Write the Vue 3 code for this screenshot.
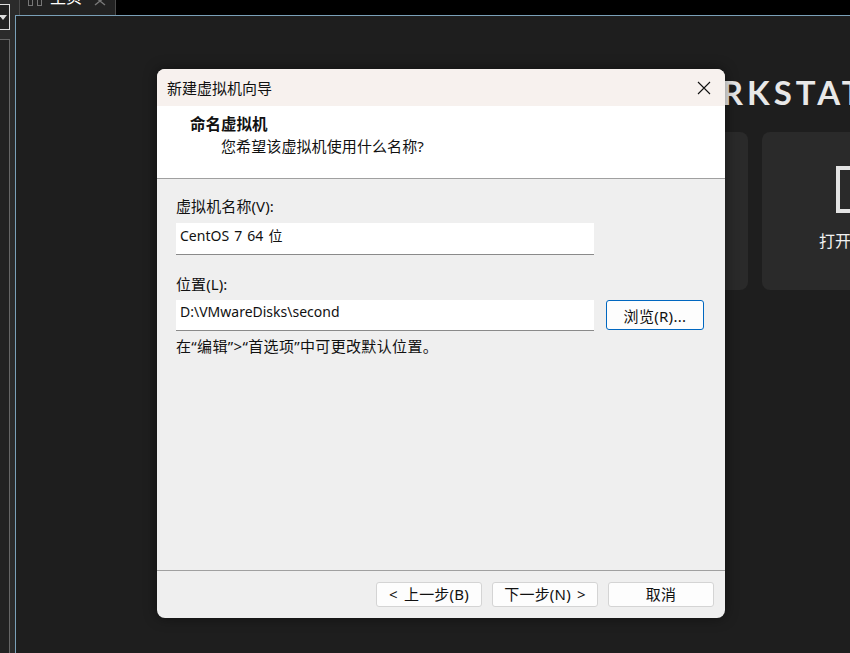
<script setup>
const footerButtons = ['< 上一步(B)', '下一步(N) >', '取消']
</script>

<template>
  <div class="app">
    <div class="topbar">
      <div class="top-left"></div>
      <div class="tab">
        <span class="tab-icon"><i></i><i></i></span>
        <span class="tab-title">主页</span>
        <svg class="tab-close" width="12" height="12" viewBox="0 0 12 12">
          <path d="M1 -3 L11 5 M11 -3 L1 5" stroke="#777" stroke-width="1.4" fill="none" />
        </svg>
      </div>
    </div>
    <div class="workspace">
      <aside class="side">
        <div class="side-drop"><span class="caret"></span></div>
        <div class="side-tree"></div>
      </aside>
      <main class="home">
        <div class="brand">WORKSTATION PRO</div>
        <div class="cards">
          <div class="card"></div>
          <div class="card">
            <div class="card-icon"></div>
            <div class="card-label">打开虚拟机</div>
          </div>
        </div>
      </main>
    </div>

    <section class="dialog">
      <header class="dlg-title">
        <span>新建虚拟机向导</span>
        <svg class="close" width="14" height="14" viewBox="0 0 14 14">
          <path d="M1 1 L13 13 M13 1 L1 13" stroke="#111" stroke-width="1.1" fill="none" />
        </svg>
      </header>
      <div class="dlg-head">
        <div class="head-title">命名虚拟机</div>
        <div class="head-sub">您希望该虚拟机使用什么名称?</div>
      </div>
      <div class="dlg-body">
        <label class="lbl">虚拟机名称(V):</label>
        <div class="row">
          <div class="input">CentOS 7 64 位</div>
        </div>
        <label class="lbl lbl2">位置(L):</label>
        <div class="row row2">
          <div class="input input2">D:\VMwareDisks\second</div>
          <button class="browse">浏览(R)...</button>
        </div>
        <p class="hint">在“编辑”&gt;“首选项”中可更改默认位置。</p>
      </div>
      <footer class="dlg-foot">
        <button v-for="b in footerButtons" :key="b" class="btn">{{ b }}</button>
      </footer>
    </section>
  </div>
</template>

<style>
html, body { margin: 0; background: #1e1e1e; }
</style>

<style scoped>
.app {
  position: relative;
  width: 850px;
  height: 653px;
  overflow: hidden;
  display: flex;
  flex-direction: column;
  background: #000;
  font-family: "Noto Sans", "Noto Sans CJK SC", sans-serif;
}
.topbar {
  height: 15px;
  flex: none;
  display: flex;
  overflow: hidden;
}
.top-left {
  width: 19px;
  flex: none;
  background: #2b2b2b;
}
.tab {
  width: 97px;
  height: 15px;
  background: #222;
  border-left: 1px solid #4a4a4a;
  border-right: 1px solid #4a4a4a;
  box-sizing: border-box;
  color: #fff;
  position: relative;
}
.tab-icon { position: absolute; left: 8px; top: 0; display: flex; gap: 4px; }
.tab-icon i {
  display: block;
  width: 3px;
  height: 5px;
  border: 1px solid #777;
  border-top: none;
}
.tab-title {
  position: absolute;
  left: 30px;
  top: -14px;
  font-size: 16px;
  line-height: 22px;
  color: #fff;
}
.tab-close {
  position: absolute;
  left: 74px;
  top: 0;
  overflow: visible;
}
.workspace {
  flex: 1;
  display: flex;
  min-height: 0;
}
.side {
  width: 15px;
  flex: none;
  background: #2b2b2b;
  margin-top: -15px;
  position: relative;
  box-sizing: border-box;
  padding-top: 4px;
}
.side-drop {
  width: 10px;
  height: 26px;
  box-sizing: border-box;
  border: 1px solid #ddd;
  border-left: none;
  background: #222;
  display: flex;
  align-items: center;
}
.caret {
  width: 0;
  height: 0;
  border-left: 4px solid transparent;
  border-right: 4px solid transparent;
  border-top: 5px solid #ddd;
  margin-left: -1px;
}
.side-tree {
  width: 10px;
  height: 620px;
  margin-top: 9px;
  box-sizing: border-box;
  border: 1px solid #666;
  border-left: none;
  background: #222;
}
.home {
  flex: 1;
  min-width: 0;
  background: #1e1e1e;
  border-top: 1px solid #7aa0b8;
  border-left: 1px solid #7aa0b8;
  box-sizing: border-box;
  overflow: hidden;
}
.brand {
  margin: 54px 0 0 637px;
  height: 46px;
  font-size: 33px;
  line-height: 44px;
  letter-spacing: 4px;
  font-weight: 700;
  color: #e8e8e8;
  font-family: "Lato", "Noto Sans", sans-serif;
  white-space: nowrap;
  width: 700px;
}
.cards {
  display: flex;
  gap: 14px;
  margin-top: 16px;
  margin-left: 538px;
  width: 700px;
}
.card {
  width: 194px;
  height: 158px;
  flex: none;
  background: #2a2a2a;
  border-radius: 8px;
  box-sizing: border-box;
  padding-top: 34px;
}
.card-icon {
  width: 46px;
  height: 47px;
  margin: 0 0 0 74px;
  box-sizing: border-box;
  border: 4px solid #e4e4e4;
}
.card-label {
  margin: 16px 0 0 57px;
  font-size: 16px;
  line-height: 24px;
  color: #f2f2f2;
  white-space: nowrap;
}
.dialog {
  position: absolute;
  left: 157px;
  top: 69px;
  width: 568px;
  height: 549px;
  border-radius: 8px;
  overflow: hidden;
  display: flex;
  flex-direction: column;
  background: #efefef;
  box-shadow: 0 0 14px rgba(0, 0, 0, 0.45);
  color: #111;
  font-size: 15px;
}
.dlg-title {
  height: 37px;
  flex: none;
  background: #f7f1ee;
  display: flex;
  align-items: center;
  justify-content: space-between;
  padding: 0 14px 0 10px;
  line-height: 20px;
  font-size: 15px;
}
.close { display: block; }
.dlg-head {
  height: 72px;
  flex: none;
  background: #fff;
  border-bottom: 1px solid #a0a0a0;
  padding-left: 33px;
}
.head-title {
  margin-top: 8px;
  font-weight: 700;
  font-size: 15.5px;
  line-height: 21px;
}
.head-sub {
  padding-left: 31px;
  line-height: 22px;
  font-size: 15px;
  letter-spacing: 0.1px;
}
.dlg-body {
  flex: 1;
  padding: 17px 21px 0 19px;
}
.lbl { display: block; line-height: 20px; font-size: 15px; letter-spacing: 0.1px; }
.lbl2 { margin-top: 19px; }
.row { display: flex; gap: 12px; margin-top: 7px; }
.row2 { margin-top: 6px; }
.input {
  width: 418px;
  height: 32px;
  box-sizing: border-box;
  background: #fff;
  border-bottom: 1px solid #8a8a8a;
  padding: 0 4px;
  line-height: 26px;
  font-size: 14px;
  word-spacing: 1.5px;
}
.input2 { height: 31px; line-height: 24px; word-spacing: 0; }
.browse {
  width: 98px;
  height: 30px;
  box-sizing: border-box;
  border: 1px solid #0067c0;
  border-radius: 3px;
  background: #fdfdfd;
  color: #111;
  font: inherit;
  font-size: 15px;
  letter-spacing: 0.3px;
  padding: 0;
}
.hint {
  margin: 5px 0 0;
  line-height: 20px;
  font-size: 15px;
  letter-spacing: 0.35px;
}
.dlg-foot {
  height: 36px;
  flex: none;
  border-top: 1px solid #a0a0a0;
  display: flex;
  justify-content: flex-end;
  gap: 10px;
  padding: 11px 11px 0 0;
}
.btn {
  width: 106px;
  height: 25px;
  box-sizing: border-box;
  border: 1px solid #d4d4d4;
  border-radius: 3px;
  background: #fdfdfd;
  color: #111;
  font: inherit;
  font-size: 15px;
  word-spacing: 2px;
  letter-spacing: 0.2px;
  padding: 0;
  line-height: 23px;
}
</style>
